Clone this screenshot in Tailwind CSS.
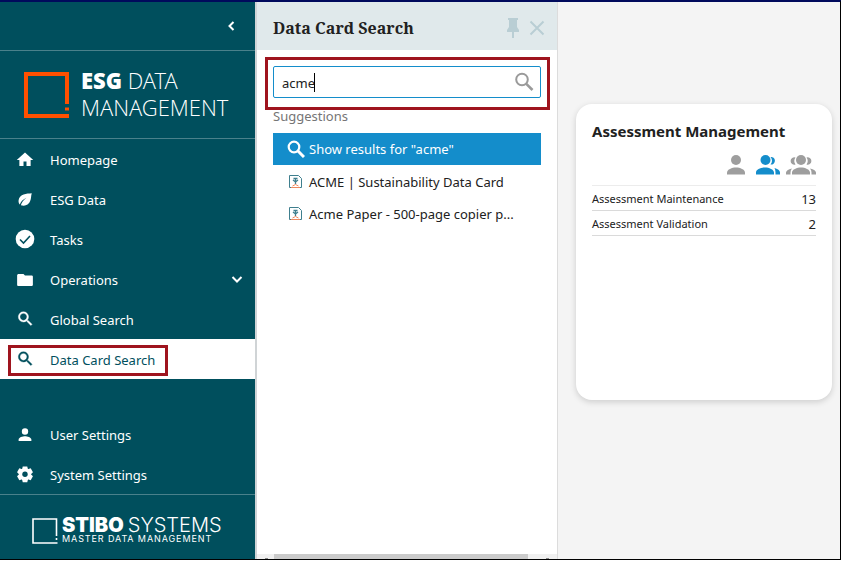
<!DOCTYPE html>
<html lang="en">

<head>
    <meta charset="UTF-8">
    <meta name="viewport" content="width=device-width, initial-scale=1.0">
    <title>ESG Data Management</title>
    <script src="https://cdn.jsdelivr.net/npm/@tailwindcss/browser@4"></script>
</head>

<body class="h-screen overflow-hidden bg-white pr-px pb-px font-['Noto_Sans','Open_Sans',sans-serif] text-[#212121]">
    <div class="flex h-full border-t-2 border-r border-b border-t-[#000a5c] border-r-black border-b-black bg-[#f4f4f4]">

        <!-- Sidebar -->
        <aside class="flex w-[257px] shrink-0 flex-col border-r-2 border-[#d0d4d6] bg-[#004f5d] text-white">
            <div class="flex h-12 shrink-0 items-center justify-end pr-4">
                <button type="button" aria-label="Collapse menu">
                    <svg class="size-4" viewBox="0 0 16 16" fill="none" stroke="currentColor" stroke-width="2"><path d="M10.500 4 6.500 8l4 4" /></svg>
                </button>
            </div>

            <div class="flex h-[89px] shrink-0 items-center gap-3 border-y border-[#4a818b] pl-6">
                <svg class="h-[46px] w-[46px]" viewBox="0 0 46 46" fill="none" stroke="#ff5000" stroke-width="4"><path d="M43 32V2H2v42h43M43 35.500v3" /></svg>
                <h1 class="-ml-px pb-px font-['Open_Sans_Light','Open_Sans',sans-serif] text-[22px] leading-[27px] font-light"><b class="font-['Open_Sans',sans-serif] font-extrabold">ESG</b> DATA<br>MANAGEMENT</h1>
            </div>

            <nav class="flex flex-1 flex-col text-[13px]">
                <a href="#" class="flex h-10 items-center gap-4 pt-1 pl-4">
                    <svg class="mb-[2px] size-[18px]" viewBox="0 0 24 24" fill="currentColor"><path d="M10 20v-6h4v6h5.500v-8h3.500L12 2 1 12h3.500v8z" /></svg>
                    Homepage
                </a>
                <a href="#" class="flex h-10 items-center gap-4 pt-1 pl-4">
                    <svg class="mb-[2px] size-[18px]" viewBox="0 0 24 24" fill="currentColor"><path d="M21 3C14 3.500 5 4 3.500 12c-.500 3 .5 5 1.500 6 2-5 5-7 9-9-4 3-6.500 6-7.500 10C14 21 19 17 20 9c.1-2 .5-4 1-6z" /></svg>
                    ESG Data
                </a>
                <a href="#" class="flex h-10 items-center gap-4 pt-1 pl-4">
                    <svg class="mb-[2px] size-[18px] overflow-visible" viewBox="0 0 18 18"><circle cx="9" cy="8" r="9.300" fill="currentColor" /><path d="m4 8.500 3.500 3.500 6.500-7" fill="none" stroke="#004f5d" stroke-width="1.600" /></svg>
                    Tasks
                </a>
                <a href="#" class="flex h-10 items-center gap-4 pt-1 pr-[10px] pl-4">
                    <svg class="mb-[2px] size-[18px]" viewBox="0 0 24 24" fill="currentColor"><path d="M10 4H3.500C2.500 4 1.500 4.900 1.500 5.500v13c0 1.100.9 1.500 2 1.500h17c1.100 0 2-.9 2-1.500V7.500c0-1.100-.9-1.500-2-1.500H12z" /></svg>
                    <span class="flex-1">Operations</span>
                    <svg class="mb-[2px] size-4" viewBox="0 0 16 16" fill="none" stroke="currentColor" stroke-width="2"><path d="m3.500 5 4.500 4.500 4.500-4.500" /></svg>
                </a>
                <a href="#" class="flex h-10 items-center gap-4 pt-1 pl-4">
                    <svg class="mb-[2px] size-[18px]" viewBox="0 2 23 23" fill="currentColor" stroke="currentColor" stroke-width=".5"><path d="M15.500 14h-.79l-.28-.27A6.471 6.471 0 0 0 16 9.500 6.500 6.500 0 1 0 9.500 16c1.610 0 3.090-.59 4.230-1.570l.27.28v.79l5 4.990L20.490 19zm-6 0C7.010 14 5 11.990 5 9.500S7.010 5 9.500 5 14 7.010 14 9.500 11.990 14 9.500 14" /></svg>
                    Global Search
                </a>
                <a href="#" class="relative flex h-10 items-center gap-4 bg-white pt-1 pl-4 text-[#004f5d]">
                    <svg class="mb-[2px] size-[18px]" viewBox="0 2 23 23" fill="currentColor" stroke="currentColor" stroke-width=".5"><path d="M15.500 14h-.79l-.28-.27A6.471 6.471 0 0 0 16 9.500 6.500 6.500 0 1 0 9.500 16c1.610 0 3.090-.59 4.230-1.570l.27.28v.79l5 4.990L20.490 19zm-6 0C7.010 14 5 11.990 5 9.500S7.010 5 9.500 5 14 7.010 14 9.500 11.990 14 9.500 14" /></svg>
                    Data Card Search
                    <span class="absolute top-[6px] left-2 h-[31px] w-40 border-3 border-[#9f141e]"></span>
                </a>
                <a href="#" class="mt-auto flex h-10 items-center gap-4 pt-1 pl-4">
                    <svg class="mb-[2px] size-[18px]" viewBox="0 0 24 24" fill="currentColor"><path d="M12 11.500a4.200 4.200 0 1 0 0-8.500 4.200 4.200 0 0 0 0 8.500M12 13.500c-3 0-8.500 1.500-8.500 4.500v2h17v-2c0-3-5.500-4.500-8.500-4.500" /></svg>
                    User Settings
                </a>
                <a href="#" class="flex h-10 items-center gap-4 pt-1 pl-4">
                    <svg class="mb-[2px] size-[18px]" viewBox="0 0 24 24"><g fill="currentColor"><circle cx="12" cy="11" r="8" /><path id="cog" d="M9 .5h6l1 4v13l-1 4H9l-1-4v-13z" /><use href="#cog" transform="rotate(60 12 11)" /><use href="#cog" transform="rotate(120 12 11)" /></g><circle cx="12" cy="11" r="3.600" fill="#004f5d" /></svg>
                    System Settings
                </a>
            </nav>

            <footer class="flex h-[65px] shrink-0 items-center gap-1 border-t border-[#4a818b] pt-2 pl-8">
                <svg class="h-[26px] w-[26px]" viewBox="0 0 26 26" fill="none" stroke="currentColor" stroke-width="1.600"><path d="M24.500 18V1H1v24h24.500M24.500 20v2" /></svg>
                <div class="font-[Inter,sans-serif]">
                    <p class="flex gap-1 text-xl leading-4"><b class="font-black">STIBO</b><span class="font-light">SYSTEMS</span></p>
                    <p class="text-[9px] leading-3 tracking-widest">MASTER DATA MANAGEMENT</p>
                </div>
            </footer>
        </aside>

        <!-- Search panel -->
        <section class="flex w-[301px] shrink-0 flex-col border-r border-[#dcdcdc] bg-white">
            <header class="flex h-12 shrink-0 items-center bg-[#e0e9eb] pt-1 pr-3 pl-4">
                <h2 class="flex-1 font-['Noto_Serif','Liberation_Serif',serif] text-base font-bold">Data Card Search</h2>
                <button type="button" aria-label="Pin" class="text-[#b9ced4]">
                    <svg class="h-5 w-3" viewBox="0 0 12 20" fill="currentColor"><path d="M1 0h10v2h-1v7l2 3v2H7v6H5v-6H0v-2l2-3V2H1z" /></svg>
                </button>
                <button type="button" aria-label="Close" class="ml-[10px] text-[#b9ced4]">
                    <svg class="size-4" viewBox="0 0 16 16" stroke="currentColor" stroke-width="2"><path d="m1.500 1.500 13 13m0-13-13 13" /></svg>
                </button>
            </header>

            <div class="relative mx-4 mt-4 flex h-8 shrink-0 items-center rounded-[2px] border border-[#148dcb] bg-white pr-[6px] pl-2">
                <input type="text" value="acme" aria-label="Search data cards" class="min-w-0 flex-1 pt-[3px] text-[13px] outline-none">
                <span class="absolute top-[6px] left-10 h-[19px] w-px bg-black"></span>
                <svg class="size-5" viewBox="0 0 20 20" fill="none" stroke="#9a9a9a" stroke-width="2"><circle cx="8" cy="7.500" r="5.800" /><path d="m12.300 11.800 6.200 6.200" stroke-width="2.600" /></svg>
                <span class="pointer-events-none absolute -top-[10px] -right-[10px] -bottom-[13px] -left-[9px] border-3 border-[#9f141e]"></span>
            </div>

            <p class="mt-2 px-4 text-[13px] leading-5 text-[#757575]">Suggestions</p>
            <ul class="mx-4 mt-[7px] text-[13px]">
                <li><a href="#" class="flex h-8 items-center gap-1 bg-[#148dcb] pt-[2px] pl-[14px] text-white">
                    <svg class="mb-[2px] size-[18px]" viewBox="0 0 18 18" fill="none" stroke="currentColor" stroke-width="2.200"><circle cx="7" cy="7" r="5.300" /><path d="m11 11 6 6" stroke-width="3" /></svg>
                    Show results for "acme"
                </a></li>
                <li><a href="#" class="flex h-8 items-center pt-1 pl-4">
                    <svg class="mr-[7px] mb-1 size-[13px]" viewBox="0 0 13 13" fill="none" stroke="#3f7f8e"><path d="M2 12.500H.5V.5h9l3 3v9H11" /><path d="M6.500 3v6M4 5l2.500 2L9 5M4.500 3.500h4" stroke-width="1.300" /><path d="M2 12.500h9M3.500 11q3-3 6 0" stroke="#ee8a60" /></svg>
                    ACME | Sustainability Data Card
                </a></li>
                <li><a href="#" class="flex h-8 items-center pt-1 pl-4">
                    <svg class="mr-[7px] mb-1 size-[13px]" viewBox="0 0 13 13" fill="none" stroke="#3f7f8e"><path d="M2 12.500H.5V.5h9l3 3v9H11" /><path d="M6.500 3v6M4 5l2.500 2L9 5M4.500 3.500h4" stroke-width="1.300" /><path d="M2 12.500h9M3.500 11q3-3 6 0" stroke="#ee8a60" /></svg>
                    Acme Paper - 500-page copier p...
                </a></li>
            </ul>

            <!-- Horizontal scrollbar -->
            <div class="mt-auto flex h-[5px] items-end bg-[#f0f0f0] px-2">
                <span class="h-px w-[3px] bg-[#8a8a8a]"></span>
                <span class="mr-[18px] ml-[6px] h-full flex-1 bg-[#cbcbcb]"></span>
                <span class="h-px w-[3px] bg-[#8a8a8a]"></span>
            </div>
        </section>

        <!-- Dashboard -->
        <main class="min-w-0 flex-1 pt-[102px] pr-2 pl-[18px]">
            <article class="h-[296px] rounded-2xl bg-white px-4 pt-[15px] shadow-[0_2px_6px_rgba(0,0,0,0.16)]">
                <h3 class="text-[15px] leading-6 font-bold">Assessment Management</h3>
                <div class="mt-[9px] flex h-[34px] justify-end border-b border-[#ececec] pt-[3px] text-[#9e9e9e]">
                    <button type="button" aria-label="Assigned to me" class="flex">
                        <svg class="h-5 w-[18px]" viewBox="0 0 18 20" fill="currentColor"><circle cx="9" cy="5" r="5" /><path d="M0 19.500v-2c0-3 5-5 9-5s9 2 9 5v2z" /></svg>
                    </button>
                    <button type="button" aria-label="Assigned to my group" class="flex text-[#148dcb]">
                        <svg class="ml-[11px] h-5 w-6" viewBox="0 0 24 20" fill="currentColor"><circle cx="9.500" cy="5" r="5" /><path d="M0 19.500v-2c0-3 5-5 9-5s9 2 9 5v2zM14.500 2a3.800 3.800 0 1 1 0 7.500q3-4 0-7.500M18.500 13c4 1 5.500 3 5.500 4.500v2h-4.500v-2q0-2.500-1-4.500" /></svg>
                    </button>
                    <button type="button" aria-label="Assigned to everyone" class="flex">
                        <svg class="ml-[6px] h-5 w-[30px]" viewBox="0 0 30 20" fill="currentColor"><circle cx="15" cy="5" r="5" /><path d="M6 19.500v-2c0-3 5-5 9-5s9 2 9 5v2zM20.500 2.500a3.700 3.700 0 1 1 0 7q2.500-3.500 0-7M9.500 2.500a3.700 3.700 0 1 0 0 7q-2.500-3.500 0-7M24 13.500c4 1 6 2.500 6 4v2h-4.500v-2q0-2.500-1.500-4M6 13.500c-4 1-6 2.500-6 4v2h4.500v-2q0-2.500 1.500-4" /></svg>
                    </button>
                </div>
                <table class="w-full border-separate border-spacing-0">
                    <tbody>
                        <tr class="h-[25px]">
                            <th scope="row" class="border-b border-[#dadada] pt-[2px] text-left text-[11px] leading-5 font-normal">Assessment Maintenance</th>
                            <td class="border-b border-[#dadada] pt-[2px] text-right text-[13px] leading-5">13</td>
                        </tr>
                        <tr class="h-[25px]">
                            <th scope="row" class="border-b border-[#dadada] pt-[2px] text-left text-[11px] leading-5 font-normal">Assessment Validation</th>
                            <td class="border-b border-[#dadada] pt-[2px] text-right text-[13px] leading-5">2</td>
                        </tr>
                    </tbody>
                </table>
            </article>
        </main>
    </div>
</body>

</html>
